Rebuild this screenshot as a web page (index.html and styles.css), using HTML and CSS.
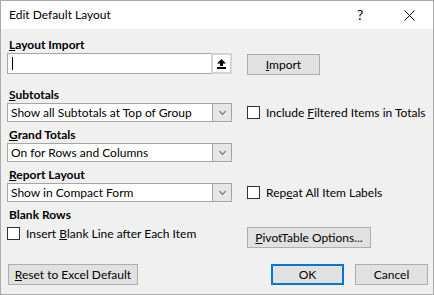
FILE: index.html
```html
<!DOCTYPE html>
<html lang="en">
<head>
  <meta charset="UTF-8" />
  <title>Edit Default Layout</title>
  <link rel="stylesheet" href="styles.css">
</head>
<body>
  <div class="dialog">
    <div class="titlebar">
      <span class="title">Edit Default Layout</span>
      <span class="help">?</span>
      <span class="close">
        <svg width="11" height="11" viewBox="0 0 11 11"><path d="M0.5 0.5 L10.5 10.5 M10.5 0.5 L0.5 10.5" stroke="#000" stroke-width="1" fill="none"/></svg>
      </span>
    </div>

    <div class="content">
      <div class="label"><u>L</u>ayout Import</div>
      <div class="row row-top">
        <div class="text-input">
          <span class="caret"></span>
          <span class="upload">
            <svg width="9" height="10" viewBox="0 0 9 10"><path d="M4.5 0 L9 4.5 L6 4.5 L6 7 L3 7 L3 4.5 L0 4.5 Z" fill="#000"/><rect x="0" y="8" width="9" height="2" fill="#000"/></svg>
          </span>
        </div>
        <button class="btn btn-import"><u>I</u>mport</button>
      </div>

      <div class="label gap-big"><u>S</u>ubtotals</div>
      <div class="row">
        <div class="select"><span class="value">Show all Subtotals at Top of Group</span><span class="arrow"></span></div>
        <label class="check"><span class="box"></span><span class="text">Include <u>F</u>iltered Items in Totals</span></label>
      </div>

      <div class="label"><u>G</u>rand Totals</div>
      <div class="row">
        <div class="select"><span class="value">On for Rows and Columns</span><span class="arrow"></span></div>
      </div>

      <div class="label"><u>R</u>eport Layout</div>
      <div class="row">
        <div class="select"><span class="value">Show in Compact Form</span><span class="arrow"></span></div>
        <label class="check"><span class="box"></span><span class="text">Rep<u>e</u>at All Item Labels</span></label>
      </div>

      <div class="label">Blank Rows</div>
      <div class="row row-top row-blank">
        <label class="check check-left"><span class="box"></span><span class="text">Insert <u>B</u>lank Line after Each Item</span></label>
        <button class="btn btn-pivot"><u>P</u>ivotTable Options...</button>
      </div>

      <div class="footer">
        <button class="btn btn-reset"><u>R</u>eset to Excel Default</button>
        <div class="footer-right">
          <button class="btn btn-ok">OK</button>
          <button class="btn">Cancel</button>
        </div>
      </div>
    </div>
  </div>
</body>
</html>
```

FILE: styles.css
```css
* {
  margin: 0;
  padding: 0;
  box-sizing: border-box;
}
html, body {
  background: #f0f0f0;
  font-family: Lato, "Open Sans", sans-serif;
  font-size: 12px;
  color: #000;
  white-space: nowrap;
}
.dialog {
  width: 434px;
  height: 295px;
  border: 1px solid #aaaaaa;
  background: #f0f0f0;
  overflow: hidden;
}
.titlebar {
  height: 28px;
  background: #fff;
  display: flex;
  align-items: center;
  padding-left: 8px;
}
.title {
  flex: 1;
  line-height: 16px;
}
.help {
  width: 12px;
  margin-right: 35px;
  font-size: 14px;
  line-height: 16px;
}
.close {
  width: 11px;
  height: 11px;
  margin-right: 18px;
  display: flex;
}
.content {
  padding: 8px 5px 0 6px;
}
.label {
  font-weight: bold;
  line-height: 15px;
  height: 15px;
  padding-left: 2px;
  margin-bottom: 1px;
  margin-top: 5px;
}
.content > .label:first-child {
  margin-top: 0;
}
.label.gap-big {
  margin-top: 12px;
}
.row {
  display: flex;
  align-items: center;
  gap: 15px;
}
.row-top {
  align-items: flex-start;
}
.text-input {
  width: 225px;
  height: 21px;
  background: #fff;
  border: 1px solid #a5a5a5;
  display: flex;
  align-items: center;
  justify-content: space-between;
  padding-left: 4px;
}
.caret {
  width: 1px;
  height: 13px;
  background: #000;
}
.upload {
  width: 21px;
  height: 21px;
  margin: -1px -1px -1px 0;
  border: 2px solid #d4d4d4;
  background: #fff;
  display: flex;
  align-items: center;
  justify-content: center;
}
.btn {
  height: 21px;
  width: 73px;
  background: #e1e1e1;
  border: 1px solid #adadad;
  font-family: Lato, "Open Sans", sans-serif;
  font-size: 12px;
  color: #000;
  line-height: 17px;
  text-align: center;
  white-space: nowrap;
}
.btn-import {
  margin-top: 1px;
}
.select {
  width: 225px;
  height: 19px;
  background: #fff;
  border: 1px solid #a5a5a5;
  display: flex;
  align-items: center;
}
.select .value {
  flex: 1;
  padding-left: 3px;
  line-height: 15px;
}
.select .arrow {
  width: 19px;
  height: 17px;
  background: #e6e6e6;
  border-left: 1px solid #a5a5a5;
  position: relative;
}
.select .arrow::after {
  content: "";
  position: absolute;
  left: 7px;
  top: 5px;
  width: 4px;
  height: 4px;
  border-right: 1px solid #606060;
  border-bottom: 1px solid #606060;
  transform: rotate(45deg);
}
.check {
  display: flex;
  align-items: center;
  gap: 6px;
  line-height: 15px;
}
.box {
  width: 13px;
  height: 13px;
  border: 1px solid #333;
  background: #fff;
}
.check-left {
  width: 225px;
}
.row-blank {
  margin-top: 4px;
}
.btn-pivot {
  width: 124px;
  margin-top: 1px;
}
.footer {
  display: flex;
  justify-content: space-between;
  margin-top: 16px;
  padding-left: 1px;
}
.btn-reset {
  width: 130px;
}
.footer-right {
  display: flex;
  gap: 11px;
}
.btn-ok {
  border: 2px solid #0078d7;
  line-height: 15px;
}
```
